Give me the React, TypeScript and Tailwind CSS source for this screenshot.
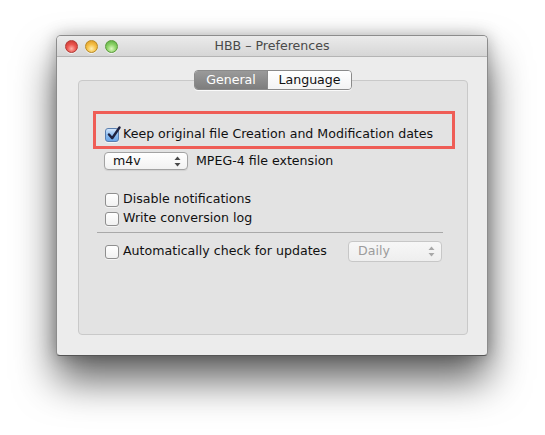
import React from "react";

const font = { fontFamily: '"DejaVu Sans", "Liberation Sans", sans-serif' };

function Checkbox({ checked = false }: { checked?: boolean }) {
  return (
    <div
      className={
        checked
          ? "relative w-[14px] h-[14px] shrink-0 rounded-[3px] border border-[#5a7fb0] bg-[linear-gradient(#d3e6fb,#8dbdf0_50%,#6aa6e8)] shadow-[0_1px_0_rgba(255,255,255,0.6)]"
          : "relative w-[14px] h-[14px] shrink-0 rounded-[3px] border border-[#8f8f8f] bg-[linear-gradient(#ffffff,#f1f1f1)] shadow-[0_1px_0_rgba(255,255,255,0.6)]"
      }
    >
      {checked && (
        <svg
          className="absolute left-[1px] top-[-3px]"
          width="14"
          height="15"
          viewBox="0 0 14 15"
        >
          <path
            d="M2 8.5 L5.2 12.2 L12.5 1.5"
            fill="none"
            stroke="#1e2240"
            strokeWidth="2.4"
            strokeLinecap="round"
            strokeLinejoin="round"
          />
        </svg>
      )}
    </div>
  );
}

function Arrows({ color = "#4a4a4a" }: { color?: string }) {
  return (
    <svg width="7" height="11" viewBox="0 0 7 11">
      <path d="M3.5 0.5 L6.5 4 L0.5 4 Z" fill={color} />
      <path d="M3.5 10.5 L6.5 7 L0.5 7 Z" fill={color} />
    </svg>
  );
}

function Row({ children, label }: { children?: React.ReactNode; label: string }) {
  return (
    <div className="flex items-center h-[19px]">
      {children}
      <span className="ml-[4px] text-[12.6px] text-[#111] leading-none whitespace-nowrap">{label}</span>
    </div>
  );
}

export default function App() {
  return (
    <div className="w-[545px] h-[435px] bg-white pt-[35px] pl-[56px] overflow-hidden" style={font}>
      <div className="w-[432px] h-[321px] flex flex-col rounded-t-[5px] rounded-b-[4px] border border-[#8c8c8c] border-b-[#555] bg-[#ececec] shadow-[0_24px_40px_rgba(0,0,0,0.62),0_0_16px_rgba(0,0,0,0.25)] overflow-hidden">
        {/* Title bar */}
        <div className="h-[21px] shrink-0 grid grid-cols-[1fr_auto_1fr] items-center bg-[linear-gradient(#ebebeb,#d6d6d6)] border-b border-[#b4b4b4]">
          <div className="flex items-center gap-[7px] pl-[8px]">
            <div className="w-[13px] h-[13px] rounded-full border border-[#b03a35] bg-[radial-gradient(circle_at_50%_70%,#ffb0a8,#ec5650_45%,#c0302a)] shadow-[0_1px_0_rgba(255,255,255,0.7)]" />
            <div className="w-[13px] h-[13px] rounded-full border border-[#b98a24] bg-[radial-gradient(circle_at_50%_70%,#ffefb0,#f6c24a_45%,#d9921c)] shadow-[0_1px_0_rgba(255,255,255,0.7)]" />
            <div className="w-[13px] h-[13px] rounded-full border border-[#5b9a3b] bg-[radial-gradient(circle_at_50%_70%,#dcf8c0,#8fd46a_45%,#4fa53a)] shadow-[0_1px_0_rgba(255,255,255,0.7)]" />
          </div>
          <div className="text-[12.6px] text-[#4a4a4a] leading-none">HBB – Preferences</div>
          <div />
        </div>

        {/* Body */}
        <div className="flex-1 pl-[21px] pr-[19px] pt-[23px] pb-[20px] flex flex-col">
          <div className="relative flex-1 rounded-[4px] border border-[#c9c9c9] bg-[#e3e3e3] flex flex-col">
            {/* Tabs */}
            <div className="self-center -mt-[11px] flex h-[20px] rounded-[4px] border border-[#8a8a8a] shadow-[0_1px_0_rgba(255,255,255,0.8)] overflow-hidden">
              <div className="w-[72px] flex items-center justify-center bg-[linear-gradient(#9a9a9a,#7d7d7d)] text-white text-[12.6px] leading-none">
                General
              </div>
              <div className="w-[84px] flex items-center justify-center border-l border-[#8a8a8a] bg-[linear-gradient(#ffffff,#f3f3f3)] text-[#111] text-[12.6px] leading-none">
                Language
              </div>
            </div>

            {/* Content */}
            <div className="flex flex-col pl-[26px] pr-[25px]">
              <div className="mt-[35px]">
                <Row label="Keep original file Creation and Modification dates">
                  <Checkbox checked />
                </Row>
              </div>

              <div className="mt-[8px] flex items-center h-[18px]">
                <div className="-ml-[1px] w-[84px] h-[18px] flex items-center justify-between pl-[8px] pr-[6px] rounded-[4px] border border-[#a3a3a3] bg-[linear-gradient(#ffffff,#f2f2f2)] shadow-[0_1px_1px_rgba(0,0,0,0.08)]">
                  <span className="text-[12.6px] text-[#111] leading-none">m4v</span>
                  <Arrows />
                </div>
                <span className="ml-[8px] text-[12.6px] text-[#111] leading-none">MPEG-4 file extension</span>
              </div>

              <div className="mt-[20px]">
                <Row label="Disable notifications">
                  <Checkbox />
                </Row>
              </div>
              <Row label="Write conversion log">
                <Checkbox />
              </Row>

              <div className="mt-[4px] -ml-[8px] w-[346px] h-px bg-[#a9a9a9]" />

              <div className="mt-[8px] flex items-center justify-between h-[21px]">
                <Row label="Automatically check for updates">
                  <Checkbox />
                </Row>
                <div className="w-[94px] h-[21px] flex items-center justify-between pl-[9px] pr-[6px] rounded-[4px] border border-[#c7c7c7] bg-[linear-gradient(#f7f7f7,#eeeeee)]">
                  <span className="text-[12.6px] text-[#9c9c9c] leading-none">Daily</span>
                  <Arrows color="#a8a8a8" />
                </div>
              </div>
            </div>

            {/* Annotation highlight */}
            <div className="absolute left-[14px] top-[30px] w-[362px] h-[38px] border-[3px] border-[#ef5d56] pointer-events-none" />
          </div>
        </div>
      </div>
    </div>
  );
}
